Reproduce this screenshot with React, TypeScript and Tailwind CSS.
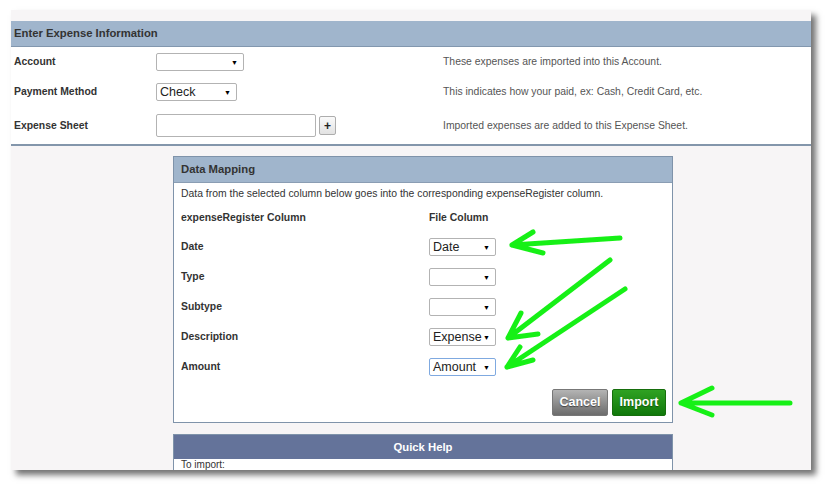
import React from 'react';

const font = { fontFamily: '"Liberation Sans", Arial, sans-serif' };

function Select({ value, width, focused }: { value?: string; width: string; focused?: boolean }) {
  return (
    <div
      className={`flex h-[18px] ${width} items-center justify-between rounded-[2px] border bg-white pl-[3px] pr-[5px] ${
        focused ? 'border-[#7fa9e0]' : 'border-[#b3b3b3]'
      }`}
    >
      <span className="text-[12.5px] leading-none text-[#222]">{value ?? ''}</span>
      <span className="text-[7px] leading-none text-black">▼</span>
    </div>
  );
}

function FormRow({ label, desc, h, children }: { label: string; desc: string; h: string; children: React.ReactNode }) {
  return (
    <div className={`flex ${h} items-center`}>
      <div className="w-[145px] pl-[3px] text-[10.4px] font-bold text-[#333]">{label}</div>
      <div className="w-[287px]">{children}</div>
      <div className="text-[10.4px] text-[#555]">{desc}</div>
    </div>
  );
}

function MapRow({ label, children }: { label: string; children?: React.ReactNode }) {
  return (
    <div className="flex h-[30px] items-center">
      <div className="w-[248px] text-[10.4px] font-bold text-[#333]">{label}</div>
      <div>{children}</div>
    </div>
  );
}

function Arrows() {
  return (
    <svg className="pointer-events-none absolute left-0 top-0" width="830" height="489" viewBox="0 0 830 489">
      <defs>
        <filter id="soft" x="-10%" y="-10%" width="120%" height="120%">
          <feGaussianBlur stdDeviation="0.7" />
        </filter>
      </defs>
      <g stroke="#19f019" strokeWidth="5" strokeLinecap="round" strokeLinejoin="round" fill="none" filter="url(#soft)">
        <path d="M620 238 L512 245 M512 245 L533 232 M512 245 L543 253" />
        <path d="M610 260 L508 338 M508 338 L521 313 M508 338 L538 334" />
        <path d="M625 289 L507 367 M507 367 L520 347 M507 367 L533 360" />
        <path d="M790 403 L681 403 M681 403 L712 388 M681 403 L712 415" />
      </g>
    </svg>
  );
}

export default function App() {
  return (
    <div className="relative h-[489px] w-[830px] overflow-hidden bg-white" style={font}>
      <div className="ml-[11px] mt-[10px] h-[460px] w-[800px] overflow-hidden bg-[#f7f5f6] pt-[11px] shadow-[5px_5px_6px_rgba(0,0,0,0.55)]">
        <div className="flex h-[26px] items-center border-b border-[#8297ae] bg-[#a0b5cc] pl-[3px] text-[11.3px] font-bold text-[#333]">
          Enter Expense Information
        </div>
        <div className="border-b-2 border-[#8396ab] bg-white">
          <FormRow label="Account" desc="These expenses are imported into this Account." h="h-[30px]">
            <Select width="w-[88px]" />
          </FormRow>
          <FormRow label="Payment Method" desc="This indicates how your paid, ex: Cash, Credit Card, etc." h="h-[30px]">
            <Select width="w-[81px]" value="Check" />
          </FormRow>
          <FormRow label="Expense Sheet" desc="Imported expenses are added to this Expense Sheet." h="h-[37px]">
            <div className="flex items-center gap-[3px]">
              <div className="h-[23px] w-[160px] rounded-[2px] border border-[#b3b3b3] bg-white" />
              <div className="flex h-[19px] w-[17px] items-center justify-center rounded-[2px] border border-[#adadad] bg-gradient-to-b from-[#fafafa] to-[#e2e2e2] text-[12px] font-bold leading-none text-[#222]">
                +
              </div>
            </div>
          </FormRow>
        </div>

        <div className="ml-[162px] mt-[10px] w-[500px]">
          <div className="border border-[#7f93aa] bg-white">
            <div className="flex h-[26px] items-center border-b border-[#8a9db3] bg-[#a0b5cc] pl-[7px] text-[11.3px] font-bold text-[#333]">
              Data Mapping
            </div>
            <div className="pl-[7px] pr-[6px]">
              <div className="flex h-[21px] items-center text-[10.4px] text-[#333]">
                Data from the selected column below goes into the corresponding expenseRegister column.
              </div>
              <div className="flex h-[28px] items-center">
                <div className="w-[248px] text-[10.4px] font-bold text-[#333]">expenseRegister Column</div>
                <div className="text-[10.4px] font-bold text-[#333]">File Column</div>
              </div>
              <MapRow label="Date">
                <Select width="w-[67px]" value="Date" />
              </MapRow>
              <MapRow label="Type">
                <Select width="w-[67px]" />
              </MapRow>
              <MapRow label="Subtype">
                <Select width="w-[67px]" />
              </MapRow>
              <MapRow label="Description">
                <Select width="w-[67px]" value="Expense" />
              </MapRow>
              <MapRow label="Amount">
                <Select width="w-[67px]" value="Amount" focused />
              </MapRow>
              <div className="flex justify-end gap-[4px] pb-[6px] pt-[7px]">
                <div className="flex h-[27px] w-[56px] items-center justify-center rounded-[2px] border border-[#777] bg-gradient-to-b from-[#b4b4b4] to-[#6c6c6c] text-[12.5px] font-bold text-white [text-shadow:0_1px_1px_rgba(0,0,0,0.5)]">
                  Cancel
                </div>
                <div className="flex h-[27px] w-[54px] items-center justify-center rounded-[2px] border border-[#166e0c] bg-gradient-to-b from-[#2fa222] to-[#10780a] text-[12.5px] font-bold text-white [text-shadow:0_1px_1px_rgba(0,0,0,0.4)]">
                  Import
                </div>
              </div>
            </div>
          </div>

          <div className="mt-[11px] border border-[#7f93aa] bg-white">
            <div className="flex h-[24px] items-center justify-center bg-[#64739a] text-[11.3px] font-bold text-white">
              Quick Help
            </div>
            <div className="pl-[7px] text-[10px] leading-[11px] text-[#333]">To import:</div>
          </div>
        </div>
      </div>
      <Arrows />
    </div>
  );
}
